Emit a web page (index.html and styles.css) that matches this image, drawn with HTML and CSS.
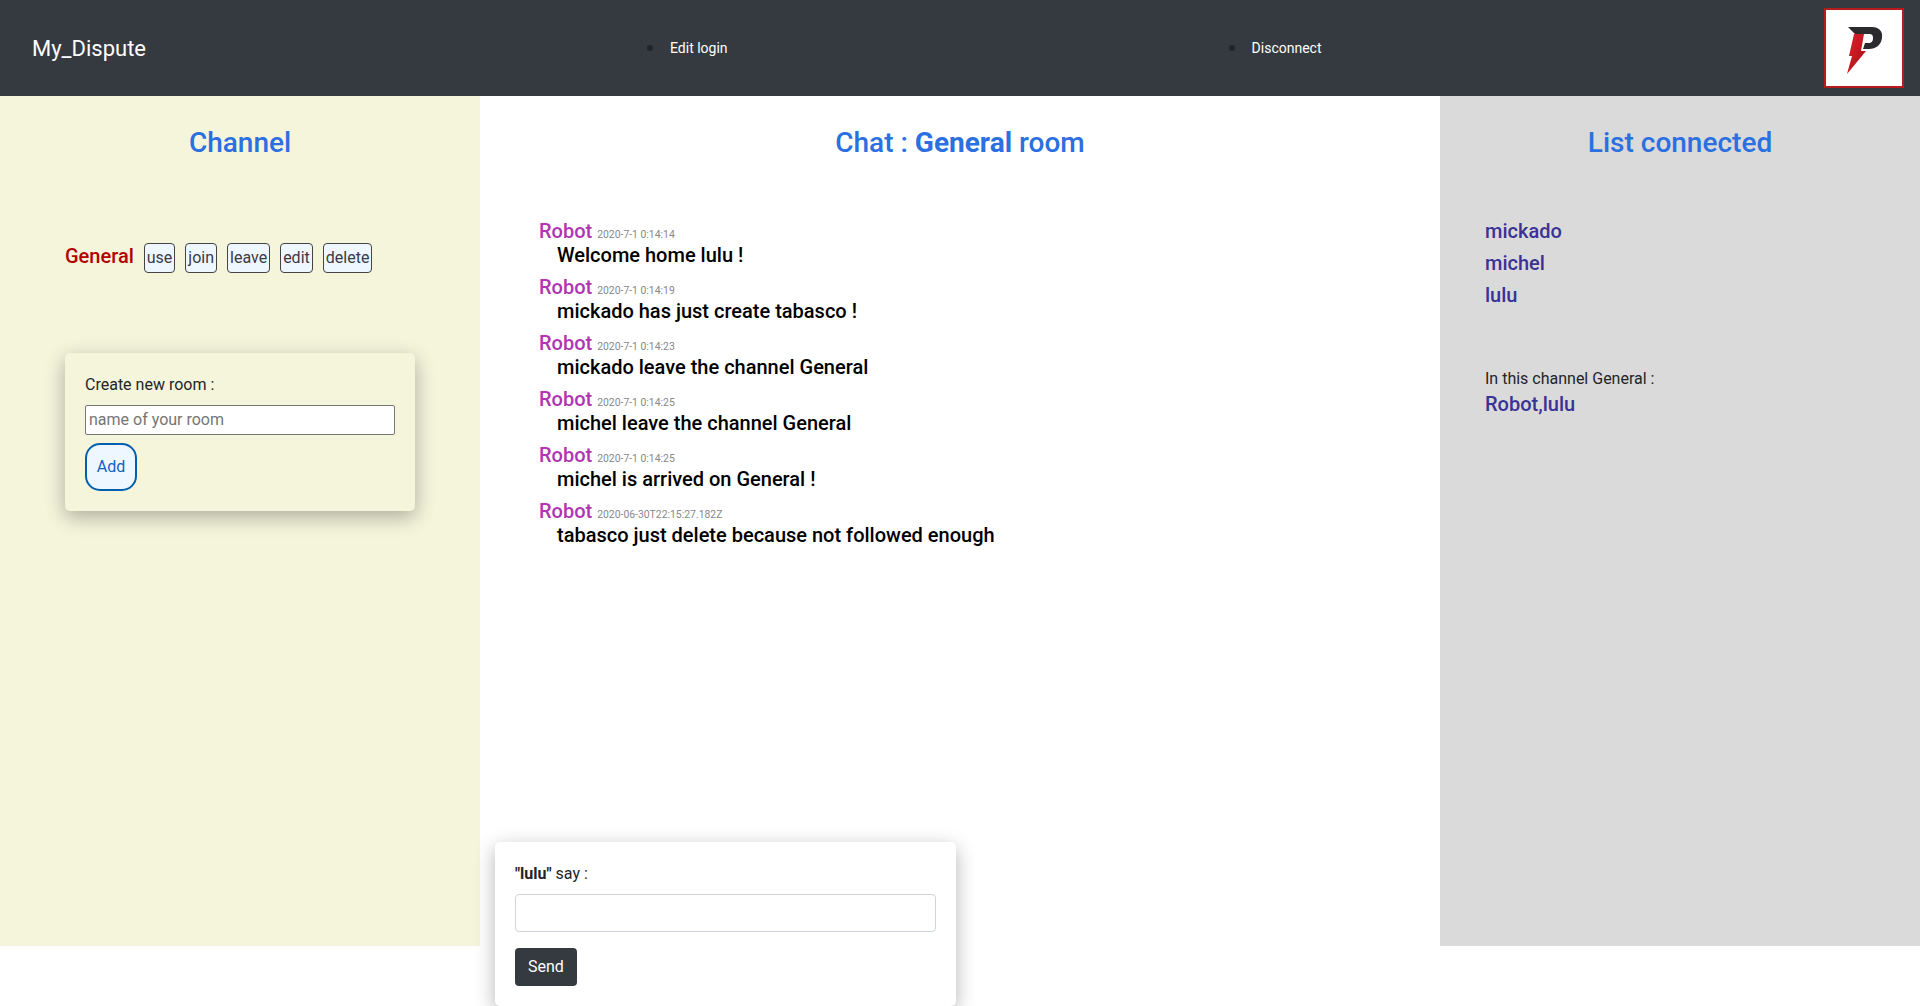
FILE: index.html
```html
<!DOCTYPE html>
<html lang="en">
  <head>
    <meta charset="UTF-8" />
    <meta name="viewport" content="width=device-width, initial-scale=1.0" />
    <title>My_Dispute</title>
    <link rel="stylesheet" href="styles.css">
  </head>
  <body>
    <nav class="navbar">
      <a class="brand" href="#">My_Dispute</a>
      <ul class="nav-list">
        <li><a href="#">Edit login</a></li>
        <li><a href="#">Disconnect</a></li>
      </ul>
      <div class="logo">
        <svg viewBox="-1 0 60 65" width="60" height="65">
          <defs>
            <linearGradient id="bolt" x1="0" y1="0" x2="1" y2="1">
              <stop offset="0" stop-color="#e0222a" />
              <stop offset="1" stop-color="#a50f16" />
            </linearGradient>
          </defs>
          <path d="M13 11H37C44 11 48 15 47 22C46 29 41 33 34 33H28L30 27H33C37 27 38 25 38 22C38 19 37 18 34 18H20Z" fill="#2b2b2e" />
          <path d="M19 18H29L26 35H31L12 58L17 40H14Z" fill="url(#bolt)" />
        </svg>
      </div>
    </nav>

    <main class="columns">
      <section class="col col-channel">
        <h3>Channel</h3>
        <div class="channel-row">
          <span class="channel-name">General</span>
          <button>use</button>
          <button>join</button>
          <button>leave</button>
          <button>edit</button>
          <button>delete</button>
        </div>
        <form class="room-card">
          <label for="room">Create new room :</label>
          <input type="text" id="room" placeholder="name of your room" />
          <button class="add-btn" type="button">Add</button>
        </form>
      </section>

      <section class="col col-chat">
        <h3>Chat : <strong>General</strong> room</h3>
        <div class="messages">
          <div class="msg">
            <div class="msg-head"><span class="author">Robot</span> <span class="time">2020-7-1 0:14:14</span></div>
            <p>Welcome home lulu !</p>
          </div>
          <div class="msg">
            <div class="msg-head"><span class="author">Robot</span> <span class="time">2020-7-1 0:14:19</span></div>
            <p>mickado has just create tabasco !</p>
          </div>
          <div class="msg">
            <div class="msg-head"><span class="author">Robot</span> <span class="time">2020-7-1 0:14:23</span></div>
            <p>mickado leave the channel General</p>
          </div>
          <div class="msg">
            <div class="msg-head"><span class="author">Robot</span> <span class="time">2020-7-1 0:14:25</span></div>
            <p>michel leave the channel General</p>
          </div>
          <div class="msg">
            <div class="msg-head"><span class="author">Robot</span> <span class="time">2020-7-1 0:14:25</span></div>
            <p>michel is arrived on General !</p>
          </div>
          <div class="msg">
            <div class="msg-head"><span class="author">Robot</span> <span class="time">2020-06-30T22:15:27.182Z</span></div>
            <p>tabasco just delete because not followed enough</p>
          </div>
        </div>
        <form class="say-card">
          <label for="say"><b>"lulu"</b> say :</label>
          <input type="text" id="say" />
          <button class="send-btn" type="button">Send</button>
        </form>
      </section>

      <section class="col col-list">
        <h3>List connected</h3>
        <ul class="users">
          <li>mickado</li>
          <li>michel</li>
          <li>lulu</li>
        </ul>
        <p class="in-channel">In this channel General :</p>
        <p class="in-channel-users">Robot,lulu</p>
      </section>
    </main>
  </body>
</html>
```

FILE: styles.css
```css
* {
  box-sizing: border-box;
}

body {
  font-family: Roboto, Arial, sans-serif;
  font-size: 16px;
  line-height: 1.5;
  color: #212529;
  margin: 0;
  background-color: #fff;
  height: 1006px;
  overflow: hidden;
}

/* top bar */
.navbar {
  display: flex;
  align-items: center;
  height: 96px;
  padding: 0 16px 0 32px;
  background-color: #343a40;
}

.brand {
  color: white;
  font-size: 22px;
  text-decoration: none;
  width: 114px;
}

.nav-list {
  display: flex;
  gap: 493px;
  margin: 0 0 0 501px;
  padding: 0;
  flex: 1;
  list-style: none;
}

.nav-list li {
  display: flex;
  align-items: center;
}

.nav-list li::before {
  content: "";
  width: 6px;
  height: 6px;
  margin-right: 9px;
  border-radius: 50%;
  background-color: #212529;
}

.nav-list a {
  padding: 8px;
  color: white;
  font-size: 14px;
  text-decoration: none;
}

.logo {
  display: flex;
  align-items: center;
  justify-content: center;
  width: 80px;
  height: 80px;
  background-color: white;
  border: 2px solid #b71c1c;
}

/* columns */
.columns {
  display: flex;
  height: 850px;
}

.col {
  padding-top: 30px;
}

.col h3 {
  margin: 0;
  font-size: 28px;
  font-weight: 500;
  line-height: 1.2;
  text-align: center;
  color: #2c6fe0;
}

.col h3 strong {
  font-weight: 700;
}

.col-channel {
  width: 480px;
  padding-left: 65px;
  padding-right: 65px;
  background-color: beige;
}

.col-chat {
  display: flex;
  flex-direction: column;
  width: 960px;
  background-color: white;
}

.col-list {
  width: 480px;
  background-color: #dadada;
}

/* channel list */
.channel-row {
  display: flex;
  align-items: center;
  margin-top: 83px;
}

.channel-name {
  margin-right: 10px;
  margin-bottom: 4px;
  font-size: 20px;
  font-weight: 500;
  line-height: 24px;
  color: #b30000;
}

.channel-row button {
  height: 30px;
  margin-right: 10px;
  padding: 0 2px;
  font-family: Roboto, Arial, sans-serif;
  font-size: 16px;
  color: #3a3a44;
  background-color: #eef6ff;
  border: 1px solid #444;
  border-radius: 4px;
}

.room-card {
  display: flex;
  flex-direction: column;
  align-items: flex-start;
  margin-top: 80px;
  padding: 20px;
  background-color: beige;
  border-radius: 5px;
  box-shadow: 0 6px 20px rgba(0, 0, 0, 0.3);
}

.room-card label {
  margin-bottom: 8px;
}

.room-card input {
  width: 100%;
  height: 30px;
  padding: 0 3px;
  font-family: Roboto, Arial, sans-serif;
  font-size: 16px;
  background-color: white;
  border: 1px solid #767676;
  border-radius: 2px;
}

.add-btn {
  width: 52px;
  height: 48px;
  margin-top: 8px;
  padding: 0;
  font-family: Roboto, Arial, sans-serif;
  font-size: 16px;
  color: #0d62c4;
  background-color: #eef6ff;
  border: 2px solid #0060b0;
  border-radius: 15px;
}

/* chat */
.messages {
  flex: 1;
  margin-top: 59px;
  padding-left: 59px;
}

.msg {
  margin-bottom: 8px;
  line-height: 24px;
}

.msg-head {
  font-size: 20px;
}

.msg p {
  margin: 0;
  padding-left: 18px;
  font-size: 20px;
  font-weight: 500;
  color: black;
}

.author {
  font-weight: 500;
  color: #b035b0;
}

.time {
  font-size: 10.4px;
  line-height: 1;
  color: #888;
}

.say-card {
  display: flex;
  flex-direction: column;
  align-items: flex-start;
  width: 461px;
  margin: 0 0 -60px 15px;
  padding: 20px;
  background-color: white;
  border-radius: 5px;
  box-shadow: 0 6px 20px rgba(0, 0, 0, 0.3);
}

.say-card label {
  margin-bottom: 8px;
}

.say-card input {
  width: 100%;
  height: 38px;
  border: 1px solid #ced4da;
  border-radius: 4px;
}

.send-btn {
  margin-top: 16px;
  padding: 7px 13px;
  font-family: Roboto, Arial, sans-serif;
  font-size: 16px;
  line-height: 24px;
  color: white;
  background-color: #343a40;
  border: none;
  border-radius: 4px;
}

/* connected users */
.users {
  margin: 55px 0 0;
  padding: 0 0 0 45px;
  list-style: none;
}

.users li {
  font-size: 20px;
  font-weight: 500;
  line-height: 32px;
  color: #3b3296;
}

.in-channel {
  margin: 56px 0 0 45px;
}

.in-channel-users {
  margin: 0 0 0 45px;
  font-size: 20px;
  font-weight: 500;
  line-height: 26px;
  color: #3b3296;
}
```
